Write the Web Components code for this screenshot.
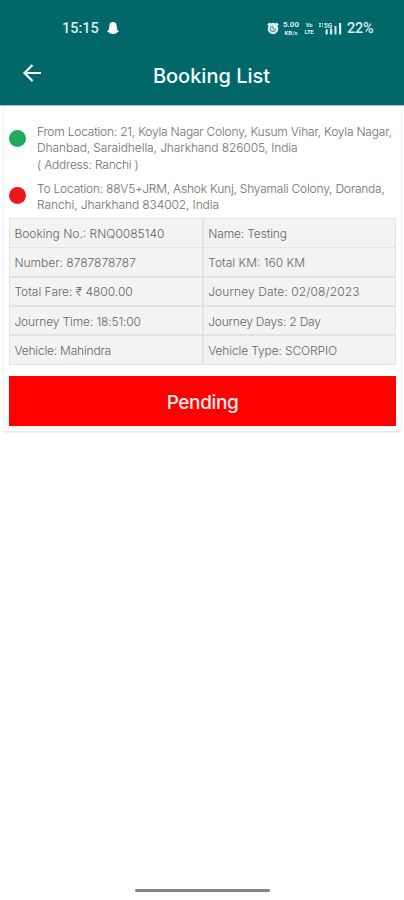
<!DOCTYPE html>
<html lang="en">
<head>
<meta charset="utf-8">
<title>Booking List</title>
<style>
  body {
    margin: 0;
    background: #fff;
    font-family: Inter, "Liberation Sans", sans-serif;
  }
</style>
</head>
<body>
<booking-screen></booking-screen>
<script>
class StatusBar extends HTMLElement {
  constructor() {
    super()
    this.attachShadow({ mode: 'open' })
    this.shadowRoot.innerHTML = `
      <style>
        :host {
          display: flex;
          align-items: center;
          box-sizing: border-box;
          height: 56px;
          padding: 0 29px 0 62px;
          color: #d9eeee;
          font: 500 14px/16px Roboto, sans-serif;
        }
        svg { display: block; fill: currentColor; }
        .time { width: 37px; padding-top: 1px; font-size: 14.5px; }
        .ghost { margin-left: 8px; color: #fff; }
        .right { display: flex; align-items: center; margin-left: auto; }
        .stack { text-align: center; }
        .stack span { display: block; }
        .speed { width: 20px; margin-left: 2px; font-weight: 700; font-size: 8px; line-height: 9px; }
        .speed .unit { font-size: 6px; line-height: 7px; }
        .volte { width: 10px; margin-left: 3px; font-size: 6px; line-height: 7px; font-weight: 700; letter-spacing: -.3px; }
        .signal { margin-left: 4px; }
        .battery { margin-left: 5px; padding-top: 1px; width: 28px; font-size: 14.5px; letter-spacing: -.2px; }
      </style>
      <span class="time">15:15</span>
      <svg class="ghost" width="12" height="12" viewBox="0 0 12 12"><path d="M6 0C3.500 0 2.400 1.600 2.400 3.300v1.700L1.500 5.300l.8 1C2 7.700 1.200 8.500.2 9.200c.2.800 1 .9 1.800 1l.4 1c1.300-.3 2 .8 3.600.8s2.300-1.100 3.600-.8l.4-1c.8-.1 1.600-.2 1.800-1-1-.7-1.800-1.500-2.100-2.900l.8-1-.9-.3V3.300C9.600 1.600 8.500 0 6 0z"/></svg>
      <div class="right">
        <svg width="12" height="13" viewBox="0 0 12 13"><path d="M.3 2.300 2.500.5l1 .9a5.500 5.500 0 0 1 5 0l1-.9 2.200 1.800-1.100 2A5.300 5.300 0 1 1 1.400 4.300z"/><path d="M6 4a2.800 2.800 0 1 0 2.800 2.800" fill="none" stroke="#016769" stroke-width=".7"/><path d="M6 5v2l1.500.8" fill="none" stroke="#016769" stroke-width=".7"/></svg>
        <div class="stack speed"><span>5.00</span><span class="unit">KB/s</span></div>
        <div class="stack volte"><span>Vo</span><span>LTE</span></div>
        <svg class="signal" width="24" height="13" viewBox="0 0 24 13"><path d="M1 1h2v1.500H1zM1 3.500h2V5H1zM4 1h1v1.500H4zM4 3.500h1V5H4zM7.500 7.500h2.200v5H7.500zM12 6.500h2.200v6h-2.200zM16.500 4h2v8.500h-2zM21 1h2.200v11.500H21z"/><text x="6" y="5.500" font-size="6.500" font-weight="700">5G</text></svg>
        <span class="battery">22%</span>
      </div>
    `
  }
}

class AppHeader extends HTMLElement {
  constructor() {
    super()
    this.attachShadow({ mode: 'open' })
    this.shadowRoot.innerHTML = `
      <style>
        :host {
          display: block;
          height: 105px;
          background: #016769;
          border-bottom: 1px solid #a5c9cd;
        }
        .bar {
          display: grid;
          grid-template-columns: 61px 1fr 42px;
          align-items: center;
          height: 40px;
          color: #f4ffff;
        }
        svg { margin: -7px 0 0 22px; fill: none; stroke: currentColor; stroke-width: 2.2; }
        h1 {
          margin: 0;
          text-align: center;
          font-size: 20px;
          font-weight: 450;
          letter-spacing: 0;
          white-space: nowrap;
        }
      </style>
      <status-bar></status-bar>
      <div class="bar">
        <svg width="20" height="18" viewBox="0 0 20 18"><path d="M19 9H2.500M10.500 1 2.500 9l8 8"/></svg>
        <h1><slot></slot></h1>
      </div>
    `
  }
}

class RoutePoint extends HTMLElement {
  constructor() {
    super()
    this.attachShadow({ mode: 'open' })
    this.shadowRoot.innerHTML = `
      <style>
        :host {
          display: grid;
          grid-template-columns: 17px 1fr;
          column-gap: 11px;
          color: #6e6e6e;
          font-size: 12px;
          font-weight: 300;
          line-height: 16px;
          letter-spacing: -.21px;
          white-space: nowrap;
        }
        i {
          width: 17px;
          height: 17px;
          margin-top: 6px;
          border-radius: 50%;
          background: var(--dot);
        }
      </style>
      <i></i>
      <div><slot></slot></div>
    `
  }
}

class DetailCell extends HTMLElement {
  constructor() {
    super()
    this.attachShadow({ mode: 'open' })
    this.shadowRoot.innerHTML = `
      <style>
        :host {
          display: flex;
          align-items: center;
          padding: 1px 0 0 4.4px;
          background: #f3f3f3;
          color: #666;
          font-size: 12px;
          font-weight: 300;
          letter-spacing: -.13px;
          white-space: nowrap;
        }
      </style>
      <span><slot></slot></span>
    `
  }
}

class BookingCard extends HTMLElement {
  constructor() {
    super()
    this.attachShadow({ mode: 'open' })
    this.shadowRoot.innerHTML = `
      <style>
        :host {
          display: block;
          box-sizing: border-box;
          height: 324px;
          margin: 2px 2px 0 3px;
          padding: 15px 5px 0 5px;
          border: 1px solid #f1f1f1;
          border-top-color: #fff;
          border-bottom-color: #e9e9e9;
          border-radius: 2px;
          box-shadow: 0 1px 1px #f1f1f1;
        }
        .route { height: 94px; }
        .details {
          display: grid;
          grid-template-columns: 192px 1fr;
          grid-auto-rows: 27.5px;
          gap: 1.8px;
          padding: 1px;
          background: #e3e3e3;
        }
        .status {
          display: flex;
          align-items: center;
          justify-content: center;
          height: 50px;
          margin-top: 11.3px;
          padding-top: 3px;
          box-sizing: border-box;
          background: #fe0000;
          color: #fff0f0;
          font-size: 19px;
          font-weight: 450;
          letter-spacing: -.4px;
        }
      </style>
      <div class="route"><slot name="route"></slot></div>
      <div class="details"><slot></slot></div>
      <div class="status"><slot name="status"></slot></div>
    `
  }
}

class BookingScreen extends HTMLElement {
  constructor() {
    super()
    this.attachShadow({ mode: 'open' })
    this.shadowRoot.innerHTML = `
      <style>
        :host { display: flex; flex-direction: column; width: 404px; height: 900px; overflow: hidden; }
        .from { --dot: #20ab5c; }
        .to { --dot: #ed171f; margin-top: 8px; }
        .second { letter-spacing: -.1px; }
        .address { margin-top: 1px; }
        .wide { letter-spacing: .1px; }
        .plain { letter-spacing: 0; }
        .tight { letter-spacing: -.2px; }
        .home { width: 135px; height: 3px; margin: auto 0 8px 135px; border-radius: 2px; background: #858585; }
      </style>
      <app-header>Booking List</app-header>
      <booking-card>
        <route-point slot="route" class="from">
          <div>From Location: 21, Koyla Nagar Colony, Kusum Vihar, Koyla Nagar,</div>
          <div class="second">Dhanbad, Saraidhella, Jharkhand 826005, India</div>
          <div class="address">( Address: Ranchi )</div>
        </route-point>
        <route-point slot="route" class="to">
          <div>To Location: 88V5+JRM, Ashok Kunj, Shyamali Colony, Doranda,</div>
          <div class="second">Ranchi, Jharkhand 834002, India</div>
        </route-point>
        <detail-cell class="plain">Booking No.: RNQ0085140</detail-cell>
        <detail-cell>Name: Testing</detail-cell>
        <detail-cell class="plain">Number: 8787878787</detail-cell>
        <detail-cell class="plain">Total KM: 160 KM</detail-cell>
        <detail-cell class="plain">Total Fare: ₹ 4800.00</detail-cell>
        <detail-cell class="wide">Journey Date: 02/08/2023</detail-cell>
        <detail-cell>Journey Time: 18:51:00</detail-cell>
        <detail-cell class="tight">Journey Days: 2 Day</detail-cell>
        <detail-cell class="tight">Vehicle: Mahindra</detail-cell>
        <detail-cell>Vehicle Type: SCORPIO</detail-cell>
        <span slot="status">Pending</span>
      </booking-card>
      <div class="home"></div>
    `
  }
}

customElements.define('status-bar', StatusBar)
customElements.define('app-header', AppHeader)
customElements.define('route-point', RoutePoint)
customElements.define('detail-cell', DetailCell)
customElements.define('booking-card', BookingCard)
customElements.define('booking-screen', BookingScreen)
</script>
</body>
</html>
